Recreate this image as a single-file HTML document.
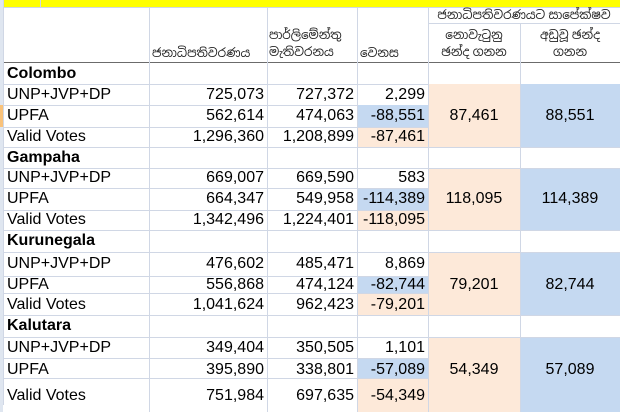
<!DOCTYPE html>
<html><head><meta charset="utf-8"><style>
body{margin:0;width:620px;height:412px;overflow:hidden;background:#fff;position:relative;font-family:"Liberation Sans",Arial,sans-serif;font-size:16px;color:#000}
.a{position:absolute}
.h{position:absolute;left:3px;width:617px;height:1px;background:#d0d7e5}
.v{position:absolute;top:7px;width:1px;height:405px;background:#d0d7e5}
.c{position:absolute;line-height:20px;white-space:nowrap}
.r{text-align:right}
.pe{background:#fde9d9}
.bl{background:#c5d9f1}
.si{font-family:"Liberation Sans","Noto Sans Sinhala",sans-serif;font-size:12px;color:#222}
</style></head><body>
<div class="a" style="left:0;top:0;width:620px;height:7px;background:#ffff00"></div>
<div class="a" style="left:0;top:0;width:3px;height:412px;background:#dfe6f0"></div>
<div class="a" style="left:0;top:105px;width:3px;height:22px;background:#f9c27a"></div>
<!-- shaded cells -->
<div class="a pe" style="left:428px;top:84px;width:92px;height:63px"></div>
<div class="a bl" style="left:520px;top:84px;width:100px;height:63px"></div>
<div class="a pe" style="left:428px;top:168px;width:92px;height:62px"></div>
<div class="a bl" style="left:520px;top:168px;width:100px;height:62px"></div>
<div class="a pe" style="left:428px;top:252px;width:92px;height:63px"></div>
<div class="a bl" style="left:520px;top:252px;width:100px;height:63px"></div>
<div class="a pe" style="left:428px;top:337px;width:92px;height:75px"></div>
<div class="a bl" style="left:520px;top:337px;width:100px;height:75px"></div>
<div class="a bl" style="left:357px;top:105px;width:71px;height:22px"></div>
<div class="a pe" style="left:357px;top:127px;width:71px;height:20px"></div>
<div class="a bl" style="left:357px;top:188px;width:71px;height:22px"></div>
<div class="a pe" style="left:357px;top:210px;width:71px;height:20px"></div>
<div class="a bl" style="left:357px;top:276px;width:71px;height:17px"></div>
<div class="a pe" style="left:357px;top:293px;width:71px;height:22px"></div>
<div class="a bl" style="left:357px;top:358px;width:71px;height:20px"></div>
<div class="a pe" style="left:357px;top:378px;width:71px;height:34px"></div>
<!-- grid -->
<div class="h" style="top:7px"></div><div class="h" style="top:23px;left:428px;width:192px"></div>
<div class="h" style="top:62px;background:#6b6b6b"></div>
<div class="h" style="top:84px;width:425px"></div>
<div class="h" style="top:105px;width:354px"></div><div class="h" style="top:127px;width:425px"></div>
<div class="h" style="top:147px"></div><div class="h" style="top:168px"></div>
<div class="h" style="top:188px;width:425px"></div><div class="h" style="top:210px;width:425px"></div>
<div class="h" style="top:230px"></div><div class="h" style="top:252px"></div>
<div class="h" style="top:276px;width:425px"></div><div class="h" style="top:293px;width:425px"></div>
<div class="h" style="top:315px"></div><div class="h" style="top:337px"></div>
<div class="h" style="top:358px;width:425px"></div><div class="h" style="top:378px;width:425px"></div>
<div class="v" style="left:3px;top:0"></div><div class="v" style="left:40px;top:0;height:7px"></div>
<div class="v" style="left:149px"></div><div class="v" style="left:267px"></div>
<div class="v" style="left:357px"></div><div class="v" style="left:428px"></div>
<div class="v" style="left:520px;top:23px;height:389px"></div>
<!-- header -->
<div class="c si" style="left:428px;top:7px;width:192px;text-align:center;line-height:16px">ජනාධිපතිවරණයට සාපේක්ෂව</div>
<div class="c si" style="left:152px;top:43px">ජනාධිපතිවරණය</div>
<div class="c si" style="left:269px;top:27px;line-height:17px">පාර්ලිමේන්තු<br>මැතිවරනය</div>
<div class="c si" style="left:360px;top:43px">වෙනස</div>
<div class="c si" style="left:428px;top:27px;width:92px;text-align:center;line-height:17px">නොවැටුනු<br>ඡන්ද ගනන</div>
<div class="c si" style="left:520px;top:27px;width:100px;text-align:center;line-height:17px">අඩුවූ ඡන්ද<br>ගනන</div>
<!-- body -->
<div style="position:absolute;left:0;top:0">
<div class="c" style="left:7px;top:64px;font-weight:bold">Colombo</div>
<div class="c" style="left:7px;top:85px">UNP+JVP+DP</div><div class="c r" style="left:149px;width:115px;top:85px">725,073</div><div class="c r" style="left:267px;width:87px;top:85px">727,372</div><div class="c r" style="left:357px;width:68px;top:85px">2,299</div>
<div class="c" style="left:7px;top:106px">UPFA</div><div class="c r" style="left:149px;width:115px;top:106px">562,614</div><div class="c r" style="left:267px;width:87px;top:106px">474,063</div><div class="c r" style="left:357px;width:68px;top:106px">-88,551</div>
<div class="c" style="left:7px;top:127px">Valid Votes</div><div class="c r" style="left:149px;width:115px;top:127px">1,296,360</div><div class="c r" style="left:267px;width:87px;top:127px">1,208,899</div><div class="c r" style="left:357px;width:68px;top:127px">-87,461</div>
<div class="c" style="left:428px;width:92px;text-align:center;top:106px">87,461</div><div class="c" style="left:520px;width:100px;text-align:center;top:106px">88,551</div>

<div class="c" style="left:7px;top:148px;font-weight:bold">Gampaha</div>
<div class="c" style="left:7px;top:168px">UNP+JVP+DP</div><div class="c r" style="left:149px;width:115px;top:168px">669,007</div><div class="c r" style="left:267px;width:87px;top:168px">669,590</div><div class="c r" style="left:357px;width:68px;top:168px">583</div>
<div class="c" style="left:7px;top:189px">UPFA</div><div class="c r" style="left:149px;width:115px;top:189px">664,347</div><div class="c r" style="left:267px;width:87px;top:189px">549,958</div><div class="c r" style="left:357px;width:68px;top:189px">-114,389</div>
<div class="c" style="left:7px;top:210px">Valid Votes</div><div class="c r" style="left:149px;width:115px;top:210px">1,342,496</div><div class="c r" style="left:267px;width:87px;top:210px">1,224,401</div><div class="c r" style="left:357px;width:68px;top:210px">-118,095</div>
<div class="c" style="left:428px;width:92px;text-align:center;top:189px">118,095</div><div class="c" style="left:520px;width:100px;text-align:center;top:189px">114,389</div>

<div class="c" style="left:7px;top:231px;font-weight:bold">Kurunegala</div>
<div class="c" style="left:7px;top:254px">UNP+JVP+DP</div><div class="c r" style="left:149px;width:115px;top:254px">476,602</div><div class="c r" style="left:267px;width:87px;top:254px">485,471</div><div class="c r" style="left:357px;width:68px;top:254px">8,869</div>
<div class="c" style="left:7px;top:275px">UPFA</div><div class="c r" style="left:149px;width:115px;top:275px">556,868</div><div class="c r" style="left:267px;width:87px;top:275px">474,124</div><div class="c r" style="left:357px;width:68px;top:275px">-82,744</div>
<div class="c" style="left:7px;top:295px">Valid Votes</div><div class="c r" style="left:149px;width:115px;top:295px">1,041,624</div><div class="c r" style="left:267px;width:87px;top:295px">962,423</div><div class="c r" style="left:357px;width:68px;top:295px">-79,201</div>
<div class="c" style="left:428px;width:92px;text-align:center;top:275px">79,201</div><div class="c" style="left:520px;width:100px;text-align:center;top:275px">82,744</div>

<div class="c" style="left:7px;top:316px;font-weight:bold">Kalutara</div>
<div class="c" style="left:7px;top:338px">UNP+JVP+DP</div><div class="c r" style="left:149px;width:115px;top:338px">349,404</div><div class="c r" style="left:267px;width:87px;top:338px">350,505</div><div class="c r" style="left:357px;width:68px;top:338px">1,101</div>
<div class="c" style="left:7px;top:360px">UPFA</div><div class="c r" style="left:149px;width:115px;top:360px">395,890</div><div class="c r" style="left:267px;width:87px;top:360px">338,801</div><div class="c r" style="left:357px;width:68px;top:360px">-57,089</div>
<div class="c" style="left:7px;top:386px">Valid Votes</div><div class="c r" style="left:149px;width:115px;top:386px">751,984</div><div class="c r" style="left:267px;width:87px;top:386px">697,635</div><div class="c r" style="left:357px;width:68px;top:386px">-54,349</div>
<div class="c" style="left:428px;width:92px;text-align:center;top:360px">54,349</div><div class="c" style="left:520px;width:100px;text-align:center;top:360px">57,089</div>
</div>
</body></html>
